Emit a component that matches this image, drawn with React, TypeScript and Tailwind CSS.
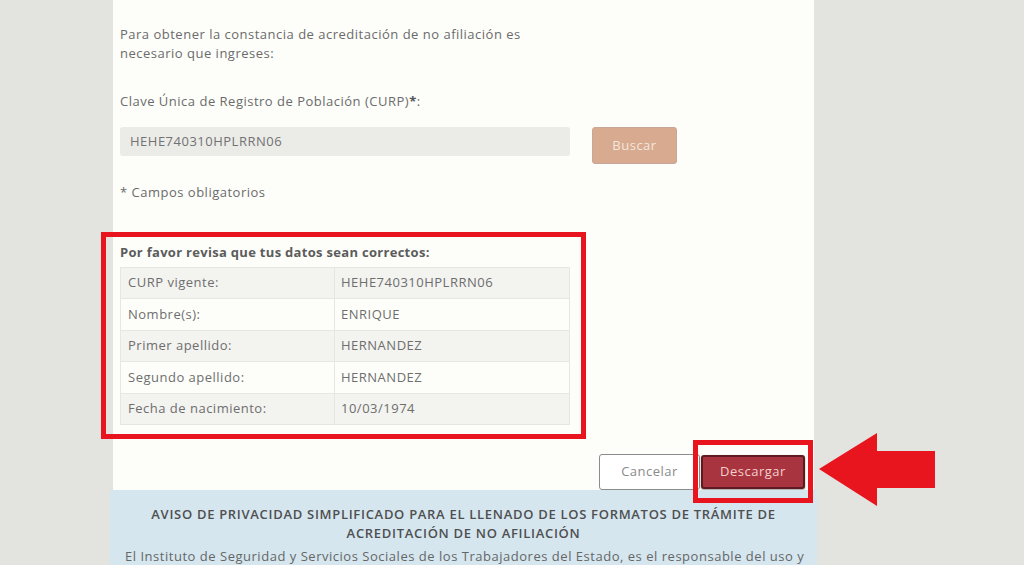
import React from "react";

const rows: [string, string][] = [
  ["CURP vigente:", "HEHE740310HPLRRN06"],
  ["Nombre(s):", "ENRIQUE"],
  ["Primer apellido:", "HERNANDEZ"],
  ["Segundo apellido:", "HERNANDEZ"],
  ["Fecha de nacimiento:", "10/03/1974"],
];

export default function App() {
  return (
    <div
      className="relative h-[565px] w-[1024px] overflow-hidden bg-[#e3e3df] tracking-[0.5px] text-[#6b6b6b]"
      style={{ fontFamily: '"Open Sans", "Noto Sans", sans-serif' }}
    >
      <div className="ml-[110px] flex w-[707px] flex-col">
        {/* form card */}
        <div className="mx-[3px] bg-[#fdfefa] pl-[7px] pr-[9px] pt-[25px]">
          <p className="w-[430px] text-[13px] leading-[19px]">
            Para obtener la constancia de acreditación de no afiliación es necesario que ingreses:
          </p>
          <p className="mt-[29px] text-[13px] leading-[19px]">
            Clave Única de Registro de Población (CURP)<span className="font-bold text-[#555]">*</span>:
          </p>
          <div className="mt-[16px] flex items-start">
            <div className="flex h-[29px] w-[450px] items-center rounded-[3px] bg-[#ebebe8] px-[10px] text-[13px] text-[#727272]">
              HEHE740310HPLRRN06
            </div>
            <button className="ml-[22px] h-[37px] w-[85px] rounded-[3px] border border-[#c9a69a] bg-[#d8aa90] text-[13px] tracking-[0.5px] text-[#f4e6dc]">
              Buscar
            </button>
          </div>
          <p className="mt-[19px] text-[13px] leading-[19px]">* Campos obligatorios</p>

          <div className="mt-[41px] w-[450px]">
            <p className="text-[13px] font-bold leading-[19px] tracking-[0.3px] text-[#5c5c5c]">
              Por favor revisa que tus datos sean correctos:
            </p>
            <table className="mt-[5px] w-[450px] border-collapse text-[13px] text-[#6e6e6e]">
              <tbody>
                {rows.map(([label, value], i) => (
                  <tr key={label} className={i % 2 === 0 ? "bg-[#f3f3f0]" : "bg-[#fdfefa]"}>
                    <td className="h-[31.4px] w-[214px] border border-[#e6e6e3] pl-[7px]">{label}</td>
                    <td className="h-[31.4px] border border-[#e6e6e3] pl-[6px]">{value}</td>
                  </tr>
                ))}
              </tbody>
            </table>
          </div>

          <div className="mt-[29px] flex items-center justify-end">
            <button className="h-[36px] w-[101px] rounded-[3px] border border-[#8c8c8c] bg-white text-[13px] tracking-[0.5px] text-[#8a8a8a]">
              Cancelar
            </button>
            <button className="ml-[1px] h-[34px] w-[104px] rounded-[3px] border-2 border-[#5e1a20] bg-[#a8343f] text-[13px] tracking-[0.5px] text-[#f3cfcb] shadow-[0_1px_2px_rgba(0,0,0,0.4)]">
              Descargar
            </button>
          </div>
        </div>

        {/* privacy notice */}
        <div className="h-[80px] overflow-hidden bg-[#d5e6ef] pt-[15px]">
          <p className="mx-auto w-[660px] text-center text-[13px] font-semibold leading-[19px] tracking-[0.7px] text-[#4f4f4f]">
            AVISO DE PRIVACIDAD SIMPLIFICADO PARA EL LLENADO DE LOS FORMATOS DE TRÁMITE DE ACREDITACIÓN DE NO AFILIACIÓN
          </p>
          <p className="mt-[4px] whitespace-nowrap pl-[15px] text-[13px] leading-[19px] tracking-[0.52px] text-[#666]">
            El Instituto de Seguridad y Servicios Sociales de los Trabajadores del Estado, es el responsable del uso y
          </p>
        </div>
      </div>

      {/* highlight frames */}
      <div className="pointer-events-none absolute left-[101px] top-[232px] h-[207px] w-[485px] border-[5px] border-[#e8141e]" />
      <div className="pointer-events-none absolute left-[693px] top-[440px] h-[63px] w-[120px] border-[5px] border-[#e8141e]" />

      {/* pointer arrow */}
      <svg className="absolute left-[819px] top-[433px]" width="117" height="74" viewBox="0 0 117 74">
        <polygon points="0,36 58,0 58,18 116,18 116,55 58,55 58,73" fill="#e8141e" />
      </svg>
    </div>
  );
}
